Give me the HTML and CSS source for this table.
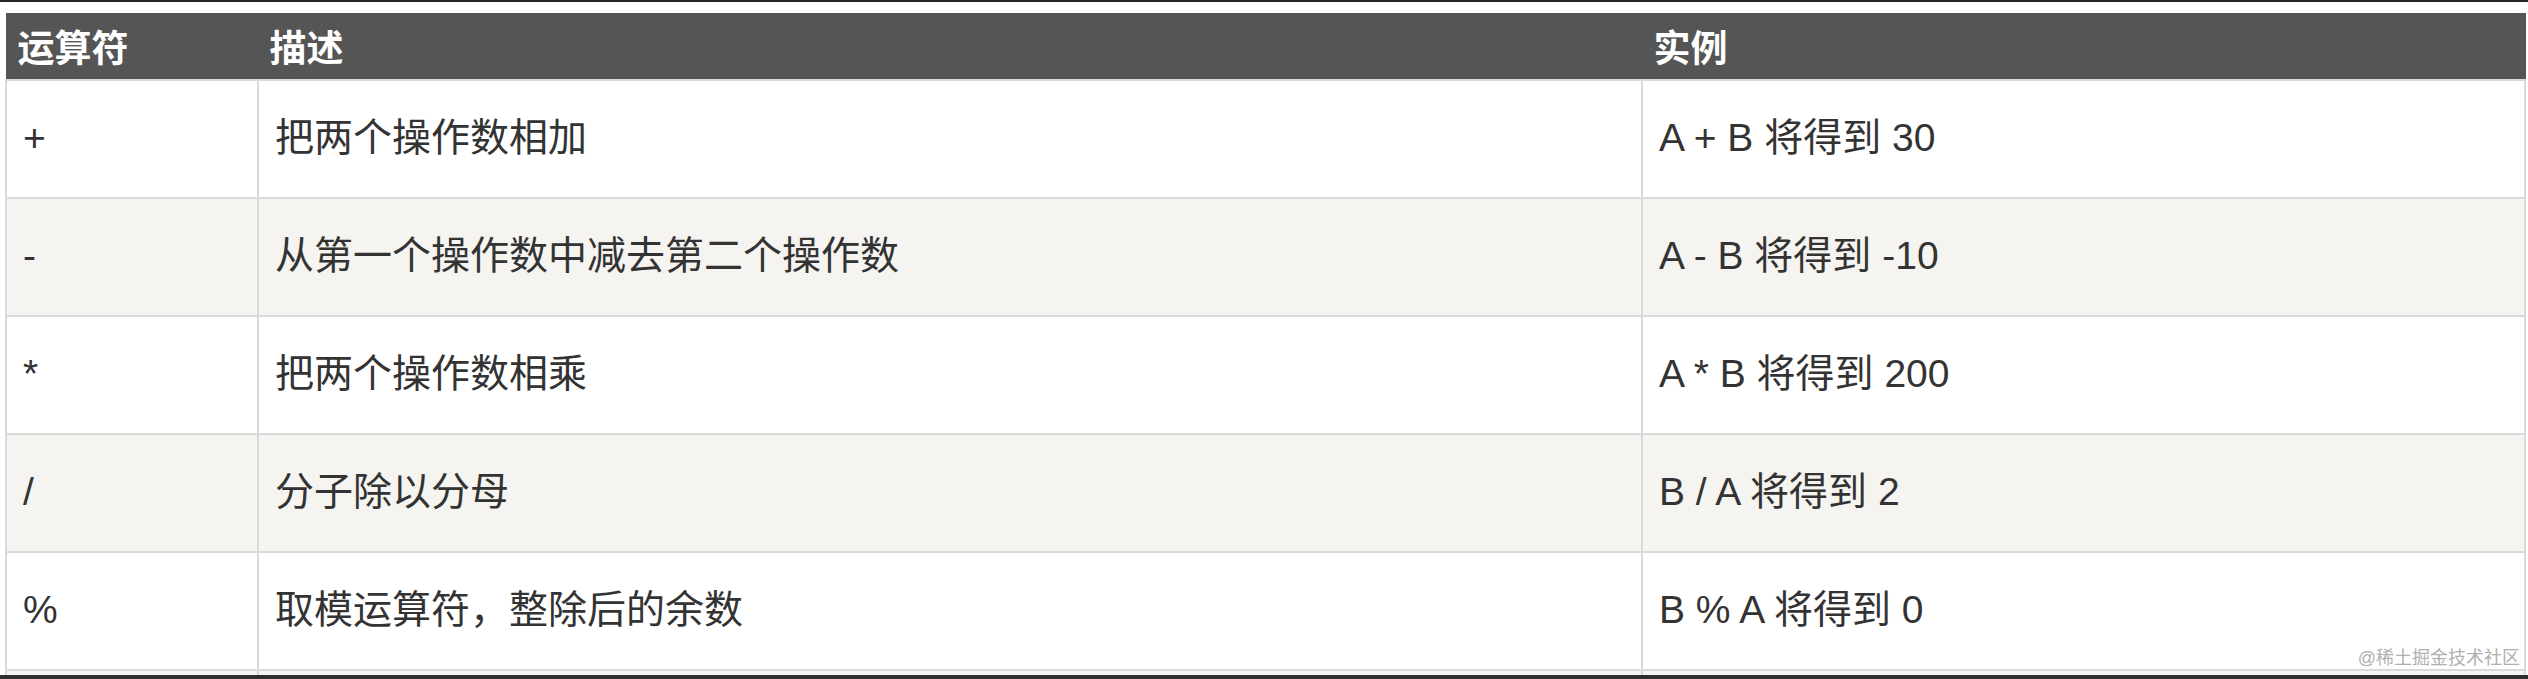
FILE: index.html
```html
<!DOCTYPE html>
<html lang="zh-CN">
<head>
<meta charset="utf-8">
<title>运算符</title>
<link rel="stylesheet" href="styles.css">
</head>
<body>
<div class="frame">
  <table class="reference">
    <colgroup>
      <col class="c1">
      <col class="c2">
      <col class="c3">
    </colgroup>
    <thead>
      <tr class="head">
        <th>运算符</th>
        <th>描述</th>
        <th>实例</th>
      </tr>
    </thead>
    <tbody>
      <tr>
        <td>+</td>
        <td>把两个操作数相加</td>
        <td>A + B 将得到 30</td>
      </tr>
      <tr class="alt">
        <td>-</td>
        <td>从第一个操作数中减去第二个操作数</td>
        <td>A - B 将得到 -10</td>
      </tr>
      <tr>
        <td>*</td>
        <td>把两个操作数相乘</td>
        <td>A * B 将得到 200</td>
      </tr>
      <tr class="alt">
        <td>/</td>
        <td>分子除以分母</td>
        <td>B / A 将得到 2</td>
      </tr>
      <tr>
        <td>%</td>
        <td>取模运算符，整除后的余数</td>
        <td>B % A 将得到 0</td>
      </tr>
      <tr class="alt">
        <td></td>
        <td></td>
        <td></td>
      </tr>
    </tbody>
  </table>
  <div class="watermark">@稀土掘金技术社区</div>
</div>
</body>
</html>
```

FILE: styles.css
```css
html, body {
  margin: 0;
  padding: 0;
  background: #ffffff;
}

body {
  font-family: "Liberation Sans", Arial, "Noto Sans CJK SC", sans-serif;
  color: #333333;
}

.frame {
  position: relative;
  height: 679px;
  box-sizing: border-box;
  border-top: 2px solid #262626;
  border-bottom: 4px solid #2e2e2e;
  padding: 11px 0 0 5px;
  overflow: hidden;
  background: #ffffff;
}

.reference {
  border-collapse: collapse;
  table-layout: fixed;
  width: 2519px;
}

.c1 { width: 252px; }
.c2 { width: 1384px; }
.c3 { width: 883px; }

.reference th {
  background: #555555;
  color: #ffffff;
  font-size: 37px;
  font-weight: bold;
  text-align: left;
  vertical-align: middle;
  height: 66px;
  padding: 0 11px;
  border: 1px solid #555555;
  box-sizing: border-box;
}

.reference td {
  font-size: 39px;
  line-height: 1.2;
  height: 118px;
  padding: 0 16px;
  border: 2px solid #d9d9d9;
  vertical-align: middle;
  box-sizing: border-box;
}

.reference tr.alt td {
  background: #f5f4f0;
}

.watermark {
  position: absolute;
  right: 8px;
  bottom: 7px;
  font-size: 18px;
  line-height: 20px;
  color: #b0b0b0;
  font-family: "Liberation Sans", "Noto Sans CJK SC", sans-serif;
  white-space: nowrap;
}
```
